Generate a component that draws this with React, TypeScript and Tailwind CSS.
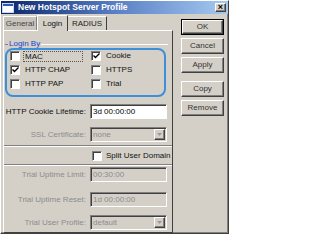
import React from "react";

const raised =
  "border border-t-white border-l-white border-r-[#404040] border-b-[#404040] shadow-[inset_-1px_-1px_0_#808080]";
const sunken =
  "border border-t-[#808080] border-l-[#808080] border-r-white border-b-white shadow-[inset_1px_1px_0_#404040]";

function Check({ checked }: { checked?: boolean }) {
  return (
    <span className={`relative flex h-[10px] w-[10px] shrink-0 items-center justify-center bg-white ${sunken}`}>
      {checked && (
        <svg width="7" height="6" viewBox="0 0 7 6" className="block">
          <path d="M0.5 2.5 L2.5 4.5 L6.5 0.5" stroke="#000" strokeWidth="1.4" fill="none" />
        </svg>
      )}
    </span>
  );
}

function CheckItem({ label, checked, focus }: { label: string; checked?: boolean; focus?: boolean }) {
  return (
    <div className="flex h-[14px] items-center gap-[3px]">
      <Check checked={checked} />
      <span className={focus ? "border border-dotted border-[#555] px-[1px] leading-[9px] w-[60px]" : "px-[2px]"}>
        {label}
      </span>
    </div>
  );
}

function Arrow() {
  return (
    <span className={`flex h-[11px] w-[11px] items-center justify-center bg-[#d4d0c8] ${raised}`}>
      <svg width="5" height="3" viewBox="0 0 5 3">
        <path d="M0 0 H5 L2.5 3 Z" fill="#9a9a9a" />
      </svg>
    </span>
  );
}

function Field({
  label,
  value,
  disabled,
  combo,
}: {
  label: string;
  value: string;
  disabled?: boolean;
  combo?: boolean;
}) {
  return (
    <div className="flex h-[15px] items-center">
      <span className={`w-[82px] text-right ${disabled ? "text-[#8c8c8c]" : "text-[#111]"}`}>{label}</span>
      <div
        className={`ml-[4px] flex h-[15px] w-[77px] items-center justify-between pl-[2px] pr-[1px] ${sunken} ${
          disabled ? "bg-[#d4d0c8] text-[#8c8c8c]" : "bg-white text-black"
        }`}
      >
        <span>{value}</span>
        {combo && <Arrow />}
      </div>
    </div>
  );
}

function Etched() {
  return <div className="h-[2px] border-t border-t-[#808080] border-b border-b-white" />;
}

function Button({ children, def }: { children: React.ReactNode; def?: boolean }) {
  return (
    <div className={def ? "border border-black" : ""}>
      <div className={`flex items-center justify-center bg-[#d4d0c8] text-[#333] ${raised} ${def ? "h-[14px]" : "h-[16px]"}`}>
        {children}
      </div>
    </div>
  );
}

export default function App() {
  return (
    <div className="h-[240px] w-[320px] bg-white font-['Liberation_Sans',Arial,sans-serif] text-[8px] text-[#111]">
      <div className={`flex h-[234px] w-[229px] flex-col bg-[#d4d0c8] ${raised}`}>
        {/* title bar */}
        <div className="flex h-[13px] items-center bg-gradient-to-r from-[#0a246a] via-[#5a7fc4] to-[#a6caf0] pl-[1px] pr-[2px]">
          <span className="flex h-[10px] w-[12px] flex-col border border-[#c8d8f0] bg-white">
            <span className="h-[2px] bg-[#2a5ab8]" />
          </span>
          <span className="ml-[4px] text-[8.5px] font-bold text-white">New Hotspot Server Profile</span>
          <span
            className={`ml-auto flex h-[9px] w-[11px] items-center justify-center bg-[#d4d0c8] text-[9px] font-bold leading-none text-black ${raised}`}
          >
            ×
          </span>
        </div>

        <div className="flex flex-1">
          {/* left: tabs + panel */}
          <div className="ml-[2px] flex w-[170px] flex-col">
            <div className="flex h-[16px] items-end">
              <div className="flex h-[14px] w-[34px] items-center justify-center border border-b-0 border-t-white border-l-white border-r-[#808080] bg-[#c8c4bc] text-[#444]">
                General
              </div>
              <div className="relative z-10 -mb-[1px] flex h-[16px] w-[31px] items-center justify-center border border-b-0 border-t-white border-l-white border-r-[#404040] bg-[#d4d0c8]">
                Login
              </div>
              <div className="flex h-[14px] w-[39px] items-center justify-center border border-b-0 border-l-0 border-t-white border-r-[#404040] bg-[#d4d0c8] text-[#222]">
                RADIUS
              </div>
            </div>

            <div className="relative flex flex-1 flex-col border border-t-white border-l-white border-r-[#404040] border-b-[#404040] pb-[2px]">
              {/* Login By group */}
              <div className="mt-[8px] flex h-[10px] items-center">
                <span className="ml-[1px] h-px w-[3px] bg-[#808080]" />
                <span className="px-[1px] text-[#1a3fc8]">Login By</span>
                <span className="mr-[4px] h-px flex-1 border-b border-b-white bg-[#808080]" />
              </div>
              <div className="ml-[6px] grid grid-cols-[81px_1fr]">
                <CheckItem label="MAC" focus />
                <CheckItem label="Cookie" checked />
                <CheckItem label="HTTP CHAP" checked />
                <CheckItem label="HTTPS" />
                <CheckItem label="HTTP PAP" />
                <CheckItem label="Trial" />
              </div>

              <div className="mt-[13px]">
                <Field label="HTTP Cookie Lifetime:" value="3d 00:00:00" />
              </div>
              <div className="mt-[8px]">
                <Field label="SSL Certificate:" value="none" disabled combo />
              </div>
              <div className="mt-[3px]">
                <Etched />
              </div>
              <div className="ml-[88px] mt-[4px] flex h-[10px] items-center gap-[4px]">
                <Check />
                <span>Split User Domain</span>
              </div>
              <div className="mt-[3px]">
                <Etched />
              </div>
              <div className="mt-[1px]">
                <Field label="Trial Uptime Limit:" value="00:30:00" disabled />
              </div>
              <div className="mt-[10px]">
                <Field label="Trial Uptime Reset:" value="1d 00:00:00" disabled />
              </div>
              <div className="mt-[8px]">
                <Field label="Trial User Profile:" value="default" disabled combo />
              </div>

              {/* annotation highlight */}
              <div className="absolute left-[1px] top-[17px] h-[49px] w-[161px] rounded-[8px] border-2 border-[#3d8fd9]" />
            </div>
          </div>

          {/* right: buttons */}
          <div className="ml-[8px] mt-[5px] flex w-[43px] flex-col">
            <Button def>OK</Button>
            <div className="mt-[3px]">
              <Button>Cancel</Button>
            </div>
            <div className="mt-[3px]">
              <Button>Apply</Button>
            </div>
            <div className="mt-[8px]">
              <Button>Copy</Button>
            </div>
            <div className="mt-[3px]">
              <Button>Remove</Button>
            </div>
          </div>
        </div>
      </div>
    </div>
  );
}
